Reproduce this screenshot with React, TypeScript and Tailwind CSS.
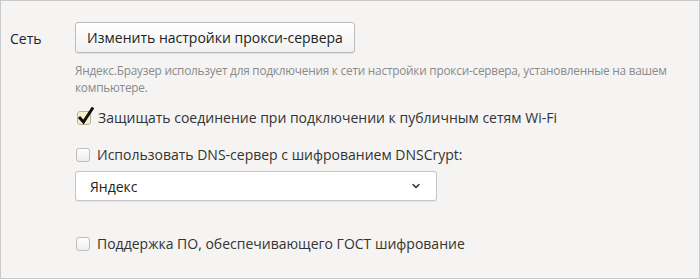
import { ChevronDown } from 'lucide-react'

const font = { fontFamily: '"Open Sans", "Noto Sans", sans-serif' }

function Box({ checked }: { checked?: boolean }) {
  return (
    <span className="relative inline-block w-[14px] h-[14px] shrink-0">
      <span
        className={
          'absolute inset-0 rounded-[3px] border ' +
          (checked
            ? 'border-[#b9b09a] bg-[#f6eecb]'
            : 'border-[#bdbdbd] bg-gradient-to-b from-white to-[#ededed]')
        }
      />
      {checked && (
        <svg className="absolute left-[0px] top-[-6px]" width="18" height="20" viewBox="0 0 18 20">
          <path d="M2 12 L6.5 17 L16 2.5" fill="none" stroke="#111" strokeWidth="3" strokeLinejoin="miter" />
        </svg>
      )}
    </span>
  )
}

function Check({ checked, label }: { checked?: boolean; label: string }) {
  return (
    <label className="flex items-center gap-[7px] text-[14px] text-[#333]">
      <Box checked={checked} />
      <span>{label}</span>
    </label>
  )
}

export default function App() {
  return (
    <div className="w-[700px] h-[279px] bg-[#f5f4f2] border border-[#c9c9c9] overflow-hidden" style={font}>
      <div className="flex pt-[21px]">
        <div className="w-[74px] pl-[9px] pt-[6px] text-[14px] text-[#222]">Сеть</div>
        <div className="flex-1 flex flex-col items-start">
          <button className="w-[280px] h-[31px] rounded-[3px] border border-[#bcbcbc] bg-gradient-to-b from-white to-[#f1f1f1] shadow-[0_1px_1px_rgba(0,0,0,0.08)] text-[14px] text-[#222]">
            Изменить настройки прокси-сервера
          </button>
          <p className="mt-[9px] pr-[6px] text-[11.8px] leading-[17px] tracking-[-0.22px] text-[#8a8a8a]">
            Яндекс.Браузер использует для подключения к сети настройки прокси-сервера, установленные на вашем компьютере.
          </p>
          <div className="mt-[11px] pl-[2px]">
            <Check checked label="Защищать соединение при подключении к публичным сетям Wi-Fi" />
          </div>
          <div className="mt-[16px] pl-[1px]">
            <Check label="Использовать DNS-сервер с шифрованием DNSCrypt:" />
          </div>
          <div className="mt-[6px] w-[362px] h-[30px] flex items-center justify-between pl-[14px] pr-[14px] rounded-[3px] border border-[#c6c6c6] bg-white shadow-[0_1px_1px_rgba(0,0,0,0.06)] text-[14px] text-[#222]">
            <span>Яндекс</span>
            <ChevronDown size={12} strokeWidth={3} className="text-[#333]" />
          </div>
          <div className="mt-[32px] pl-[1px]">
            <Check label="Поддержка ПО, обеспечивающего ГОСТ шифрование" />
          </div>
        </div>
      </div>
    </div>
  )
}
